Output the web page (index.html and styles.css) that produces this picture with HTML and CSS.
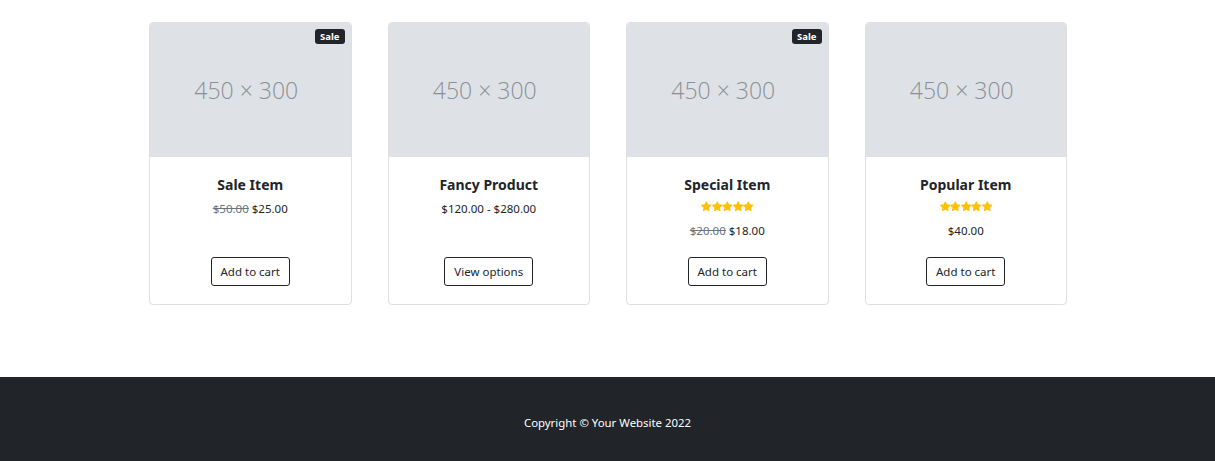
FILE: index.html
```html
<!DOCTYPE html>
<html lang="en">
<head>
<meta charset="utf-8">
<title>Shop Homepage</title>
<link rel="stylesheet" href="styles.css">
</head>
<body>
<section class="products">
  <div class="grid">
    <div class="card">
      <span class="badge">Sale</span>
      <div class="thumb">450 × 300</div>
      <div class="card-body">
        <h5 class="title">Sale Item</h5>
        <div class="price"><span class="old">$50.00</span> $25.00</div>
      </div>
      <div class="card-footer"><a class="btn" href="#">Add to cart</a></div>
    </div>
    <div class="card">
      <div class="thumb">450 × 300</div>
      <div class="card-body">
        <h5 class="title">Fancy Product</h5>
        <div class="price">$120.00 - $280.00</div>
      </div>
      <div class="card-footer"><a class="btn" href="#">View options</a></div>
    </div>
    <div class="card">
      <span class="badge">Sale</span>
      <div class="thumb">450 × 300</div>
      <div class="card-body">
        <h5 class="title">Special Item</h5>
        <div class="stars">
          <svg viewBox="0 0 16 16"><use href="#star"/></svg><svg viewBox="0 0 16 16"><use href="#star"/></svg><svg viewBox="0 0 16 16"><use href="#star"/></svg><svg viewBox="0 0 16 16"><use href="#star"/></svg><svg viewBox="0 0 16 16"><use href="#star"/></svg>
        </div>
        <div class="price"><span class="old">$20.00</span> $18.00</div>
      </div>
      <div class="card-footer"><a class="btn" href="#">Add to cart</a></div>
    </div>
    <div class="card">
      <div class="thumb">450 × 300</div>
      <div class="card-body">
        <h5 class="title">Popular Item</h5>
        <div class="stars">
          <svg viewBox="0 0 16 16"><use href="#star"/></svg><svg viewBox="0 0 16 16"><use href="#star"/></svg><svg viewBox="0 0 16 16"><use href="#star"/></svg><svg viewBox="0 0 16 16"><use href="#star"/></svg><svg viewBox="0 0 16 16"><use href="#star"/></svg>
        </div>
        <div class="price">$40.00</div>
      </div>
      <div class="card-footer"><a class="btn" href="#">Add to cart</a></div>
    </div>
  </div>
</section>
<footer class="footer">
  <p>Copyright © Your Website 2022</p>
</footer>
<svg class="defs" width="0" height="0">
  <defs>
    <path id="star" fill="currentColor" d="M3.612 15.443c-.386.198-.824-.149-.746-.592l.83-4.73L.173 6.765c-.329-.314-.158-.888.283-.95l4.898-.696L7.538.792c.197-.39.73-.39.927 0l2.184 4.327 4.898.696c.441.062.612.636.282.95l-3.522 3.356.83 4.73c.078.443-.36.79-.746.592L8 13.187l-4.389 2.256z"/>
  </defs>
</svg>
</body>
</html>
```
FILE: styles.css
```css
html, body {
  margin: 0;
  padding: 0;
}
body {
  font-family: "Noto Sans", "Open Sans", sans-serif;
  font-size: 11.5px;
  color: #212529;
  background: #fff;
}
.products {
  padding: 22px 0 72px 1px;
}
.grid {
  width: 918px;
  margin: 0 auto;
  display: grid;
  grid-template-columns: repeat(4, 1fr);
  column-gap: 36px;
}
.card {
  position: relative;
  display: flex;
  flex-direction: column;
  border: 1px solid #dfdfdf;
  border-radius: 4px;
  overflow: hidden;
}
.badge {
  position: absolute;
  top: 6px;
  right: 6px;
  background: #212529;
  color: #fff;
  font-size: 9.5px;
  font-weight: 700;
  line-height: 15px;
  padding: 0 5px;
  border-radius: 3px;
}
.thumb {
  height: 134px;
  background: #dee2e6;
  color: #8a9095;
  font-family: "Open Sans", sans-serif;
  font-weight: 300;
  font-size: 23px;
  display: flex;
  align-items: center;
  justify-content: center;
  padding-right: 8px;
}
.card-body {
  flex: 1;
  padding: 19px 18px 17px;
  text-align: center;
}
.title {
  margin: 0 0 6px;
  font-size: 14px;
  line-height: 18px;
  font-weight: 700;
}
.price {
  line-height: 18px;
}
.old {
  color: #6c757d;
  text-decoration: line-through;
}
.stars {
  display: flex;
  justify-content: center;
  height: 12px;
  align-items: center;
  margin-bottom: 10px;
  color: #ffc107;
}
.stars svg {
  width: 10.5px;
  height: 10.5px;
}
.card-footer {
  padding: 0 18px 18px;
  text-align: center;
}
.btn {
  display: inline-block;
  box-sizing: border-box;
  height: 29px;
  line-height: 27px;
  padding: 0 9px;
  border: 1px solid #212529;
  border-radius: 3px;
  color: #212529;
  text-decoration: none;
  font-size: 11.5px;
}
.footer {
  background: #212529;
  color: #fff;
  height: 84px;
  box-sizing: border-box;
  padding-top: 36px;
  text-align: center;
}
.footer p {
  margin: 0;
  line-height: 20px;
  font-size: 11.4px;
}
.defs {
  position: absolute;
}
```
